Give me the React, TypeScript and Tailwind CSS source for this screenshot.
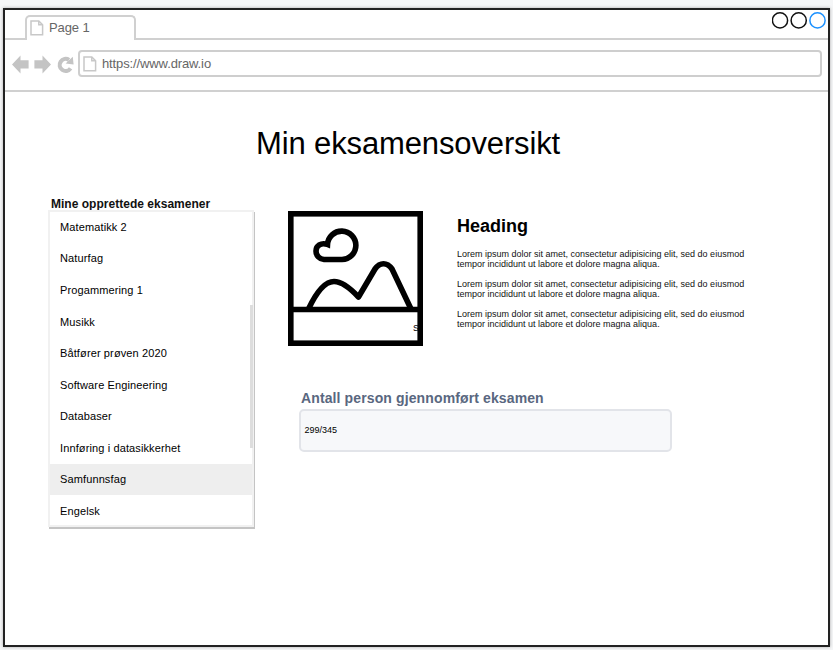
const exams = [
  "Matematikk 2",
  "Naturfag",
  "Progammering 1",
  "Musikk",
  "Båtfører prøven 2020",
  "Software Engineering",
  "Databaser",
  "Innføring i datasikkerhet",
  "Samfunnsfag",
  "Engelsk",
];

function PageIcon() {
  return (
    <svg width="14" height="16" viewBox="0 0 14 16" fill="none" stroke="#c8c8c8" strokeWidth="1.5" className="shrink-0">
      <path d="M1 1H8.8L12.6 4.8V14.8H1Z" />
      <path d="M8.8 1V4.8H12.6" />
    </svg>
  );
}

function TabStrip() {
  return (
    <div className="flex h-[30px] items-end">
      <div className="h-full w-[20px] border-b-2 border-[#d0d0d0]" />
      <div className="flex h-[25px] w-[111px] items-center rounded-t-[5px] border-x-2 border-t-2 border-[#d0d0d0] pb-[1px] pl-[3px]">
        <PageIcon />
        <span className="ml-[5px] text-[13px] leading-4 tracking-[-0.1px] text-[#666666]">Page 1</span>
      </div>
      <div className="flex h-full grow justify-end border-b-2 border-[#d0d0d0] pr-[1px] pt-[2px]">
        <svg width="55" height="17" viewBox="0 0 55 17" fill="none" strokeWidth="1.5">
          <circle cx="8" cy="8.4" r="7.6" stroke="#111111" />
          <circle cx="26.7" cy="8.4" r="7.6" stroke="#111111" />
          <circle cx="45.5" cy="8.4" r="7.6" stroke="#1c91ff" />
        </svg>
      </div>
    </div>
  );
}

function Toolbar() {
  return (
    <div className="flex h-[52px] items-start border-b-2 border-[#d0d0d0] pl-[7px] pr-[6px] pt-[10px]">
      <svg width="66" height="28" viewBox="0 0 66 28" fill="#c4c4c4" className="shrink-0">
        <path d="M0 14.5L8.5 5.6V10.2H16.6V18.6H8.5V23.4Z" />
        <path d="M39 14.5L30.5 5.6V10.2H22.4V18.6H30.5V23.4Z" />
        <path d="M58.6 18.4A6 6 0 1 1 57 9.9" fill="none" stroke="#c4c4c4" strokeWidth="4.2" />
        <path d="M60.8 6.8L61.6 14.4L53.6 13.6Z" />
      </svg>
      <div className="flex h-[27px] grow items-center rounded-[4px] border-2 border-[#cecece] pl-[3px]">
        <PageIcon />
        <span className="ml-[5px] text-[13px] leading-4 tracking-[-0.12px] text-[#666666]">https://www.draw.io</span>
      </div>
    </div>
  );
}

function ExamList() {
  return (
    <section className="w-[206px]">
      <h2 className="ml-[2px] h-[14px] whitespace-nowrap pt-[1px] text-[12px] font-bold leading-[15px] tracking-[0.02px] text-[#111111]">
        Mine opprettede eksamener
      </h2>
      <div className="relative -ml-[1px] h-[317px] w-[206px] border-2 border-[#f1f1f1] shadow-[1px_2px_0_#c4c4c4]">
        <div className="-mt-[0.6px]">
          {exams.map((name) => (
            <div
              key={name}
              className={
                "flex h-[31.55px] items-center whitespace-nowrap pl-[10px] text-[11px] tracking-[0.12px] text-black " +
                (name === "Samfunnsfag" ? "bg-[#eeeeee]" : "")
              }
            >
              {name}
            </div>
          ))}
        </div>
        <div className="absolute -right-[1px] top-[93px] h-[143px] w-[3px] bg-[#dddddd]" />
      </div>
    </section>
  );
}

function Picture() {
  return (
    <div className="relative h-[135px] w-[135px] shrink-0 overflow-hidden">
      <svg width="135" height="135" viewBox="0 0 135 135" fill="none" stroke="#000" strokeWidth="5.6">
        <rect x="2.8" y="2.8" width="129.4" height="129.4" />
        <path d="M3 98.5H132" />
        <path d="M20.5 98C28 82 36 70.5 46 70.5C54 70.5 63 78 70.5 86L87 58C92 51 99 51 104 58L123 98" strokeLinejoin="round" />
        <path d="M36 48.5H54A14.2 14.2 0 1 0 39.5 33.5C33 31 28 35 28 40A8.5 8.5 0 0 0 36 48.5Z" />
      </svg>
      <span className="absolute left-[125px] top-[111px] w-[5px] overflow-hidden text-[9px] leading-[12px] text-black">S</span>
    </div>
  );
}

function Article() {
  return (
    <article className="ml-[34px] pt-[4px] text-black">
      <h2 className="text-[18px] font-bold leading-[22px]">Heading</h2>
      <div className="mt-[12px] flex flex-col gap-[10px]">
        {[0, 1, 2].map((n) => (
          <p key={n} className="whitespace-nowrap text-[9px] leading-[10px] text-[#111111]">
            Lorem ipsum dolor sit amet, consectetur adipisicing elit, sed do eiusmod
            <br />
            tempor incididunt ut labore et dolore magna aliqua.
          </p>
        ))}
      </div>
    </article>
  );
}

export default function App() {
  return (
    <div className="h-[650px] w-[833px] overflow-hidden bg-[#f5f6f7] pl-[3px] pt-[8px] font-['Liberation_Sans',Arial,sans-serif]">
      <div className="h-[639px] w-[827px] border-2 border-[#222222] bg-white shadow-[0_0_3px_#aaaaaa]">
        <TabStrip />
        <Toolbar />
        <main className="pl-[44px]">
          <h1 className="ml-[207px] mt-[34px] whitespace-nowrap text-[31px] leading-[36px] tracking-[-0.13px] text-black">
            Min eksamensoversikt
          </h1>
          <div className="mt-[34px] flex">
            <ExamList />
            <div className="ml-[33px] mt-[15px]">
              <div className="flex">
                <Picture />
                <Article />
              </div>
              <section className="ml-[11px] mt-[42px]">
                <h2 className="mb-[1px] ml-[2px] whitespace-nowrap text-[14px] font-bold leading-[20px] tracking-[0.12px] text-[#596780]">
                  Antall person gjennomført eksamen
                </h2>
                <div className="flex h-[43px] w-[373px] items-center rounded-[5px] border-2 border-[#e2e4e9] bg-[#f7f8fa] pl-[3.5px] pt-[1px] text-[9px] text-black">
                  299/345
                </div>
              </section>
            </div>
          </div>
        </main>
      </div>
    </div>
  );
}
